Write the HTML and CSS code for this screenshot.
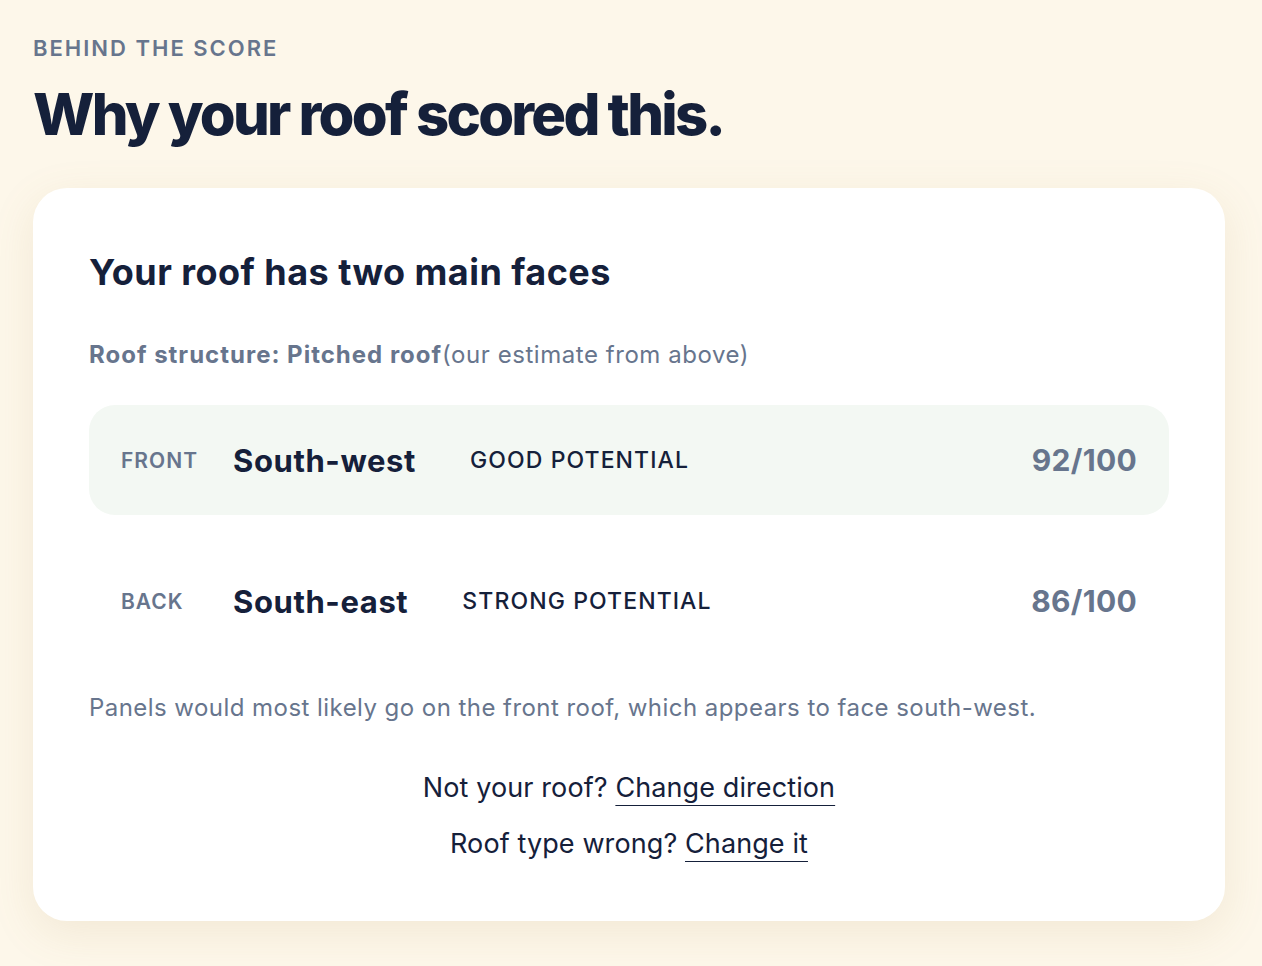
FILE: index.html
```html
<!DOCTYPE html>
<html lang="en">
<head>
<meta charset="utf-8">
<title>Behind the score</title>
<link rel="stylesheet" href="styles.css">
</head>
<body>
<main class="page">
  <p class="eyebrow">BEHIND THE SCORE</p>
  <h1 class="title">Why your roof scored this.</h1>
  <section class="card">
    <h2 class="card-title">Your roof has two main faces</h2>
    <p class="structure"><strong>Roof structure: Pitched roof</strong>(our estimate from above)</p>
    <div class="faces">
      <div class="face face-primary">
        <span class="face-label">FRONT</span>
        <span class="face-dir">South-west</span>
        <span class="face-pot">GOOD POTENTIAL</span>
        <span class="face-score">92/100</span>
      </div>
      <div class="face">
        <span class="face-label">BACK</span>
        <span class="face-dir">South-east</span>
        <span class="face-pot">STRONG POTENTIAL</span>
        <span class="face-score">86/100</span>
      </div>
    </div>
    <p class="note">Panels would most likely go on the front roof, which appears to face south-west.</p>
    <div class="links">
      <p class="link-line">Not your roof? <a href="#" class="link">Change direction</a></p>
      <p class="link-line">Roof type wrong? <a href="#" class="link">Change it</a></p>
    </div>
  </section>
</main>
</body>
</html>
```
FILE: styles.css
```css
* { box-sizing: border-box; }
html, body { margin: 0; padding: 0; }
body {
  background: #fdf7ea;
  font-family: Inter, "Noto Sans", sans-serif;
  color: #15203a;
  min-height: 966px;
}
.page {
  padding: 36px 37px 40px 33px;
}
.eyebrow {
  margin: 0;
  font-size: 22px;
  font-weight: 600;
  letter-spacing: 2px;
  color: #67758d;
  line-height: 24px;
}
.title {
  margin: 19px 0 0;
  font-size: 58px;
  font-weight: 800;
  letter-spacing: -2.75px;
  line-height: 70px;
  color: #15203a;
}
.card {
  margin-top: 39px;
  background: #ffffff;
  border-radius: 34px;
  padding: 56px 56px 60px;
  box-shadow: 0 12px 44px rgba(170, 140, 80, 0.13);
}
.card-title {
  margin: 6px 0 0;
  font-size: 36px;
  font-weight: 700;
  letter-spacing: 0.45px;
  line-height: 44px;
}
.structure {
  margin: 46px 0 0;
  font-size: 24px;
  line-height: 30px;
  color: #67758d;
  letter-spacing: 0.55px;
}
.structure strong { font-weight: 700; letter-spacing: 1px; }
.faces {
  margin-top: 35px;
  display: flex;
  flex-direction: column;
  gap: 31px;
}
.face {
  display: flex;
  align-items: center;
  height: 110px;
  padding: 0 32px;
  border-radius: 26px;
}
.face-primary { background: #f3f8f3; }
.face-label {
  width: 112px;
  flex: none;
  font-size: 21px;
  font-weight: 600;
  letter-spacing: 1px;
  color: #67758d;
}
.face-dir {
  font-size: 31px;
  font-weight: 700;
  letter-spacing: 0.6px;
  margin-right: 54px;
}
.face-pot {
  font-size: 23px;
  font-weight: 500;
  letter-spacing: 1.1px;
}
.face-score {
  margin-left: auto;
  font-size: 30px;
  font-weight: 700;
  letter-spacing: 0.3px;
  color: #67758d;
}
.note {
  margin: 37px 0 0;
  font-size: 24px;
  line-height: 30px;
  color: #67758d;
  letter-spacing: 0.45px;
}
.links {
  margin-top: 48px;
  display: flex;
  flex-direction: column;
  align-items: center;
  gap: 22px;
}
.link-line {
  margin: 0;
  font-size: 27px;
  line-height: 34px;
  letter-spacing: 0.1px;
  color: #15203a;
}
.link {
  color: #15203a;
  text-decoration: underline;
  text-decoration-thickness: 1px;
  text-underline-offset: 8px;
}
```
